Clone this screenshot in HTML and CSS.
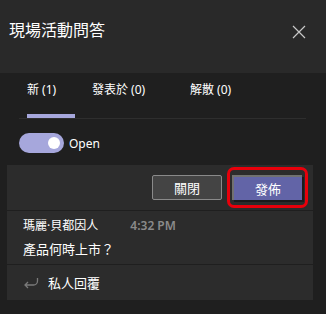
FILE: index.html
```html
<!DOCTYPE html>
<html lang="zh-Hant">
<head>
    <meta charset="UTF-8">
    <meta name="viewport" content="width=device-width, initial-scale=1.0">
    <title>現場活動問答</title>
    <link rel="stylesheet" href="styles.css">
</head>
<body>
    <div class="header">
        <h1>現場活動問答</h1>
        <svg class="close" width="14" height="14" viewBox="0 0 14 14">
            <path d="M1 1 L13 13 M13 1 L1 13" stroke="#c8c8c8" stroke-width="1.2" fill="none"/>
        </svg>
    </div>
    <div class="tabs">
        <div class="tab tab-new active">新 (1)</div>
        <div class="tab tab-pub">發表於 (0)</div>
        <div class="tab tab-dis">解散 (0)</div>
    </div>
    <div class="toggle-row">
        <div class="toggle"><div class="knob"></div></div>
        <span class="toggle-label">Open</span>
    </div>
    <div class="card">
        <div class="actions">
            <button class="btn btn-close">關閉</button>
            <button class="btn btn-publish">發佈<span class="highlight"></span></button>
        </div>
        <div class="question">
            <div class="meta">
                <span class="name">瑪麗·貝都因人</span>
                <span class="time">4:32 PM</span>
            </div>
            <div class="text">產品何時上市？</div>
        </div>
        <div class="reply">
            <svg width="16" height="12" viewBox="0 0 16 12">
                <path d="M14.5 1 V4 A4 4 0 0 1 10.5 8 H2 M5 5 L2 8 L5 11" stroke="#7a7a7a" stroke-width="1.3" fill="none"/>
            </svg>
            <span>私人回覆</span>
        </div>
    </div>
</body>
</html>
```

FILE: styles.css
```css
body {
    margin: 0;
    width: 326px;
    height: 314px;
    overflow: hidden;
    background-color: #1f1f1f;
    color: #ffffff;
    font-family: "Noto Sans", "Noto Sans CJK TC", sans-serif;
}
.header {
    height: 73px;
    background-color: #292929;
    display: flex;
    justify-content: space-between;
    align-items: flex-start;
    padding: 0 20px 0 9px;
}
.header h1 {
    margin: 18px 0 0 0;
    font-size: 16px;
    font-weight: normal;
    line-height: 24px;
}
.close {
    margin-top: 25px;
}
.tabs {
    display: flex;
    height: 45px;
    margin: 0 20px 0 19px;
    padding-left: 8px;
    border-bottom: 1px solid #2e2e2e;
}
.tab {
    font-size: 12px;
    line-height: 18px;
    padding-top: 8px;
    position: relative;
}
.tab-new {
    width: 65px;
}
.tab-pub {
    width: 98px;
}
.active::after {
    content: "";
    position: absolute;
    left: 0;
    top: 41px;
    width: 48px;
    height: 4px;
    background-color: #a6a7dc;
}
.toggle-row {
    display: flex;
    align-items: center;
    margin: 14px 0 0 19px;
}
.toggle {
    width: 45px;
    height: 20px;
    border-radius: 10px;
    background-color: #a6a7dc;
    display: flex;
    align-items: center;
    justify-content: flex-end;
}
.knob {
    width: 12px;
    height: 12px;
    border-radius: 50%;
    background-color: #ffffff;
    margin-right: 4px;
}
.toggle-label {
    font-size: 12px;
    margin-left: 5px;
}
.card {
    margin: 12px 13px 0 7px;
    background-color: #2c2c2c;
}
.actions {
    display: flex;
    justify-content: flex-end;
    gap: 10px;
    padding: 10px 11px 10px 0;
    border-bottom: 1px solid #1f1f1f;
}
.btn {
    width: 70px;
    height: 25px;
    font-family: "Noto Sans CJK TC", sans-serif;
    font-size: 13px;
    font-weight: normal;
    color: #ffffff;
    padding: 0;
    cursor: pointer;
}
.btn-close {
    background-color: #444444;
    border: 1px solid #8a8a8a;
    border-radius: 2px;
}
.btn-publish {
    position: relative;
    background-color: #6264a7;
    border: none;
    border-top: 2px solid #717171;
    border-left: 2px solid #717171;
    box-shadow: 2px 2px 0 #1b1b1b;
}
.highlight {
    position: absolute;
    top: -10px;
    bottom: -8px;
    left: -7px;
    right: -6px;
    border: 3px solid #e8000b;
    border-radius: 7px;
}
.question {
    padding: 6px 16px 5px 16px;
    border-bottom: 1px solid #1f1f1f;
}
.meta {
    font-size: 12px;
    line-height: 18px;
}
.time {
    margin-left: 29px;
    color: #8a8a8a;
    font-weight: 600;
}
.text {
    font-size: 13px;
    line-height: 20px;
    margin-top: 4px;
}
.reply {
    height: 35px;
    display: flex;
    align-items: center;
    padding-left: 16px;
    font-size: 13px;
}
.reply span {
    margin-left: 9px;
}
```
